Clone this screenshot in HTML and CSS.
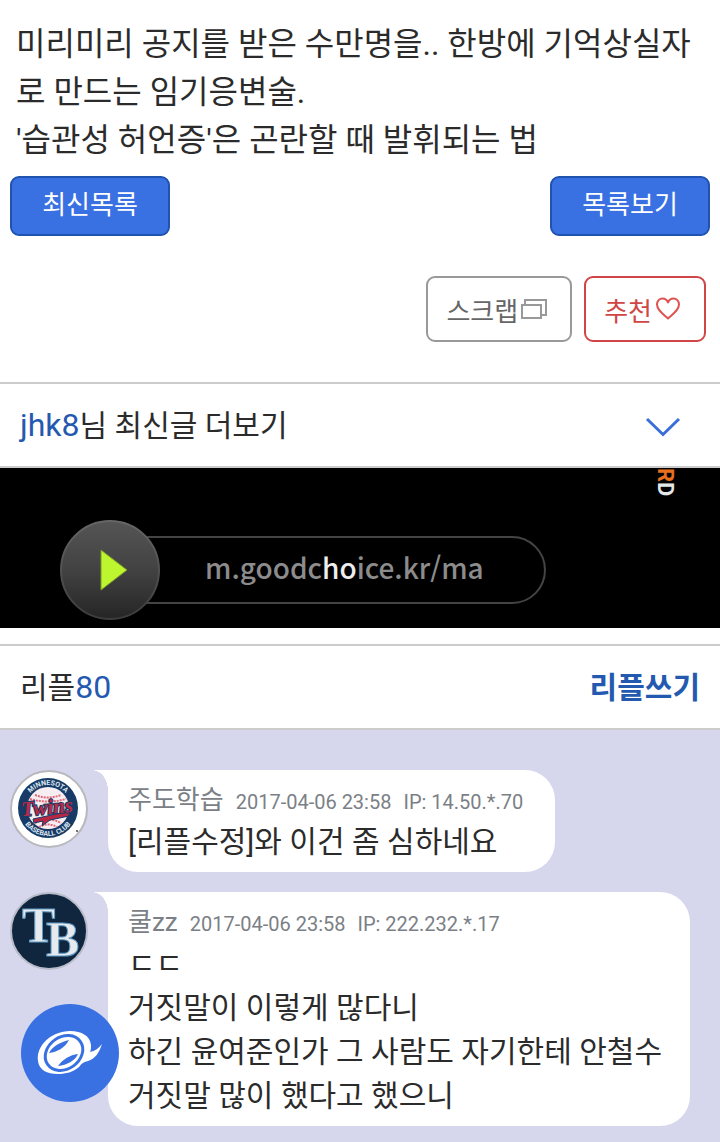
FILE: index.html
```html
<!DOCTYPE html>
<html lang="ko">
<head>
    <meta charset="UTF-8">
    <meta name="viewport" content="width=device-width, initial-scale=1.0">
    <title>게시판</title>
    <link rel="stylesheet" href="styles.css">
</head>
<body>
    <article class="post">
        <p>미리미리 공지를 받은 수만명을.. 한방에 기억상실자로 만드는 임기응변술.<br>
        '습관성 허언증'은 곤란할 때 발휘되는 법</p>
    </article>

    <nav class="list-buttons">
        <button type="button" class="btn-blue">최신목록</button>
        <button type="button" class="btn-blue">목록보기</button>
    </nav>

    <div class="actions">
        <button type="button" class="btn-line scrap">스크랩<svg width="28" height="22" viewBox="0 0 28 22" fill="none" stroke="#999" stroke-width="2">
            <path d="M5 6V2h21v15h-4M2 7h19v13H2z"/>
        </svg></button>
        <button type="button" class="btn-line like">추천<svg width="28" height="24" viewBox="0 0 28 24" fill="none" stroke="#e05252" stroke-width="2" stroke-linejoin="round">
            <path d="M14 21.500C9 17 3 13 3 7.500 3 4 5.500 1.500 8.500 1.500c2.500 0 4.500 1.500 5.500 4 1-2.500 3-4 5.500-4C22.500 1.500 25 4 25 7.500 25 13 19 17 14 21.500z"/>
        </svg></button>
    </div>

    <!-- More posts by the author -->
    <section class="bar">
        <p><a href="#" class="latin">jhk8</a>님 최신글 더보기</p>
        <button type="button" class="toggle" aria-label="더보기">
            <svg width="36" height="22" viewBox="0 0 36 22" fill="none" stroke="#3a6fd8" stroke-width="3">
                <path d="M2 3l16 15.500L34 3"/>
            </svg>
        </button>
    </section>

    <!-- Ad banner -->
    <a href="#" class="ad">
        <span class="ad-logo"><span class="orange">R</span>D</span>
        <svg class="play" width="100" height="100" viewBox="0 0 100 100">
            <defs>
                <linearGradient id="disc" x1="0" y1="0" x2="0" y2="1">
                    <stop offset="0" stop-color="#555"/>
                    <stop offset="0.5" stop-color="#424242"/>
                    <stop offset="1" stop-color="#252525"/>
                </linearGradient>
                <linearGradient id="rim" x1="0" y1="0" x2="0" y2="1">
                    <stop offset="0" stop-color="#666"/>
                    <stop offset="1" stop-color="#3c3c3c"/>
                </linearGradient>
            </defs>
            <circle cx="50" cy="50" r="49" fill="url(#disc)" stroke="url(#rim)" stroke-width="2"/>
            <path d="M41 30v40l26-20z" fill="#bdf52f" stroke="#789a28" stroke-width="1"/>
        </svg>
        <span class="pill">m.goodc<span class="shine">ho</span>ice.kr/ma</span>
    </a>

    <section class="bar reply-bar">
        <p>리플<span class="count latin">80</span></p>
        <a href="#" class="write">리플쓰기</a>
    </section>

    <main class="replies">
        <div class="reply">
            <svg class="avatar" width="78" height="78" viewBox="0 0 78 78">
                <defs>
                    <path id="arc-top" d="M15 38a23 23 0 0 1 46 0"/>
                    <path id="arc-bottom" d="M10 38a28 28 0 0 0 56 0"/>
                </defs>
                <circle cx="39" cy="39" r="38" fill="#fff" stroke="#b8b8bd" stroke-width="2"/>
                <circle cx="38" cy="38" r="30" fill="#173b66"/>
                <circle cx="38" cy="38" r="21" fill="#f6eef0"/>
                <path d="M25 25q13 5 26 0M20 29q18 5 36 0M25 53q13-7 26 0M29 57q9-5 18 0" fill="none" stroke="#e1677b" stroke-width="2" stroke-dasharray="2 1"/>
                <text class="ring-text"><textPath href="#arc-top" startOffset="50%">MINNESOTA</textPath></text>
                <text class="ring-text"><textPath href="#arc-bottom" startOffset="50%">BASEBALL CLUB</textPath></text>
                <path d="M23 49l37-8-1 5-19 4-8 6 1-5-9 2z" fill="#b62745" stroke="#173b66" stroke-width="1"/>
                <text class="twins-text" x="37" y="44" transform="rotate(-5 38 38)">Twins</text>
                <circle cx="67" cy="61" r="1" fill="#444"/>
            </svg>
            <div class="bubble">
                <p class="meta"><span class="name">주도학습</span><span>2017-04-06 23:58</span><span>IP: 14.50.*.70</span></p>
                <p class="text">[리플수정]와 이건 좀 심하네요</p>
            </div>
        </div>

        <div class="reply">
            <svg class="avatar" width="78" height="78" viewBox="0 0 78 78">
                <circle cx="39" cy="39" r="38" fill="#10263f" stroke="#b8bcc8" stroke-width="2"/>
                <text class="tb-text" x="12" y="50">T</text>
                <text class="tb-text" x="36" y="64">B</text>
            </svg>
            <div class="bubble">
                <p class="meta"><span class="name">쿨zz</span><span>2017-04-06 23:58</span><span>IP: 222.232.*.17</span></p>
                <p class="text">ㄷㄷ<br>거짓말이 이렇게 많다니<br>하긴 윤여준인가 그 사람도 자기한테 안철수 거짓말 많이 했다고 했으니</p>
            </div>
        </div>
    </main>

    <!-- Floating home button -->
    <a href="#" class="floating" aria-label="홈">
        <svg width="100" height="100" viewBox="0 0 100 100">
            <circle cx="50" cy="50" r="49" fill="#3971e3"/>
            <path d="M18 58C16 42 32 28 50 28c12 0 20 5 21 14 0 3 0 5-1 7 5-1 9-4 12-8-3 9-7 15-14 17-4 1-6 2-9 6-6 5-13 7-21 7-11 0-19-4-20-13z" fill="#fff"/>
            <ellipse cx="44" cy="50" rx="20" ry="16" transform="rotate(-35 44 50)" fill="#fff" stroke="#3971e3" stroke-width="3"/>
            <path d="M29 50c8-1 16-5 20-13-7 2-16 5-20 13zM38 63c5-7 12-11 20-12-3 7-11 11-20 12z" fill="#3971e3"/>
        </svg>
    </a>
</body>
</html>
```

FILE: styles.css
```css
* {
    box-sizing: border-box;
}
body {
    font-family: Roboto, "Noto Sans CJK KR", sans-serif;
    background-color: #fff;
    color: #2b2b2b;
    margin: 0;
    min-height: 100vh;
    display: flex;
    flex-direction: column;
}
p {
    margin: 0;
}
a {
    color: #2459b0;
    text-decoration: none;
}
button {
    font-family: inherit;
    cursor: pointer;
}
.post {
    padding: 20px 16px 12px;
    font-size: 32px;
    line-height: 48px;
}

/* Buttons */
.list-buttons {
    display: flex;
    justify-content: space-between;
    padding: 0 10px;
}
.btn-blue {
    width: 160px;
    height: 60px;
    padding: 0 0 8px;
    font-size: 26px;
    color: #fff;
    background-color: #3971e3;
    border: 2px solid #2052b0;
    border-radius: 9px;
}
.actions {
    display: flex;
    justify-content: flex-end;
    gap: 12px;
    padding: 40px 14px;
}
.btn-line {
    display: flex;
    align-items: center;
    height: 66px;
    padding: 0 22px 0 18px;
    font-size: 26px;
    background-color: #fff;
    border: 2px solid;
    border-radius: 9px;
}
.btn-line svg {
    margin-left: 2px;
}
.scrap {
    color: #666;
    border-color: #999;
}
.like {
    color: #d04545;
}

.bar {
    display: flex;
    justify-content: space-between;
    align-items: center;
    height: 86px;
    padding: 0 20px 4px;
    font-size: 30px;
    border-top: 2px solid #ccc;
    border-bottom: 2px solid #ccc;
}
.latin {
    font-size: 32px;
}
.toggle {
    display: flex;
    padding: 8px 19px 0;
    background: none;
    border: none;
}
.count {
    color: #2459b0;
}
.write {
    font-weight: bold;
}

/* Ad */
.ad {
    position: relative;
    display: flex;
    align-items: center;
    height: 160px;
    padding: 44px 60px 0;
    background-color: #000;
    overflow: hidden;
}
.ad-logo {
    position: absolute;
    top: 0;
    right: 37px;
    font-size: 22px;
    line-height: 36px;
    font-weight: bold;
    writing-mode: vertical-rl;
    color: #e4e8e8;
}
.orange {
    color: #e8701c;
}
.play {
    z-index: 1;
}
.pill {
    margin-left: -50px;
    padding: 0 60px 6px 93px;
    font-family: "Noto Sans CJK KR", sans-serif;
    font-size: 28px;
    font-weight: 500;
    line-height: 58px;
    color: #8c8c8c;
    border: 2px solid #444;
    border-radius: 34px;
}
.shine {
    color: #eee;
}

/* Replies */
.reply-bar {
    margin-top: 16px;
}
.replies {
    flex: 1;
    display: flex;
    flex-direction: column;
    gap: 20px;
    padding: 40px 30px 16px 10px;
    background-color: #d6d7ed;
}
.reply {
    display: flex;
    align-items: flex-start;
    gap: 20px;
}
.avatar {
    flex: none;
}
.bubble {
    position: relative;
    padding: 12px 24px 8px 20px;
    background-color: #fff;
    border-radius: 0 30px 30px 30px;
}
/* the curved tail toward the avatar */
.bubble::before {
    content: "";
    position: absolute;
    top: 0;
    left: -16px;
    width: 16px;
    height: 20px;
    background: radial-gradient(ellipse 16px 20px at 0 100%, transparent 98%, #fff 100%);
}
.meta {
    display: flex;
    align-items: baseline;
    gap: 12px;
    padding-right: 8px;
    font-size: 20px;
    line-height: 36px;
    color: #7b8086;
}
.name {
    font-size: 26px;
}
.text {
    font-size: 30px;
    line-height: 44px;
}
.ring-text {
    font-size: 7px;
    font-weight: bold;
    fill: #dfe8f2;
    text-anchor: middle;
}
.twins-text {
    font-family: "Liberation Serif", serif;
    font-size: 21px;
    font-weight: bold;
    font-style: italic;
    fill: #bd2947;
    stroke: #173b66;
    stroke-width: 2px;
    paint-order: stroke;
    text-anchor: middle;
}
.tb-text {
    font-family: "Liberation Serif", serif;
    font-size: 50px;
    font-weight: bold;
    fill: #e6e9ed;
    stroke: #5f9ac4;
    stroke-width: 1px;
}
.floating {
    position: fixed;
    left: 20px;
    bottom: 39px;
}
.floating svg {
    display: block;
}
```
